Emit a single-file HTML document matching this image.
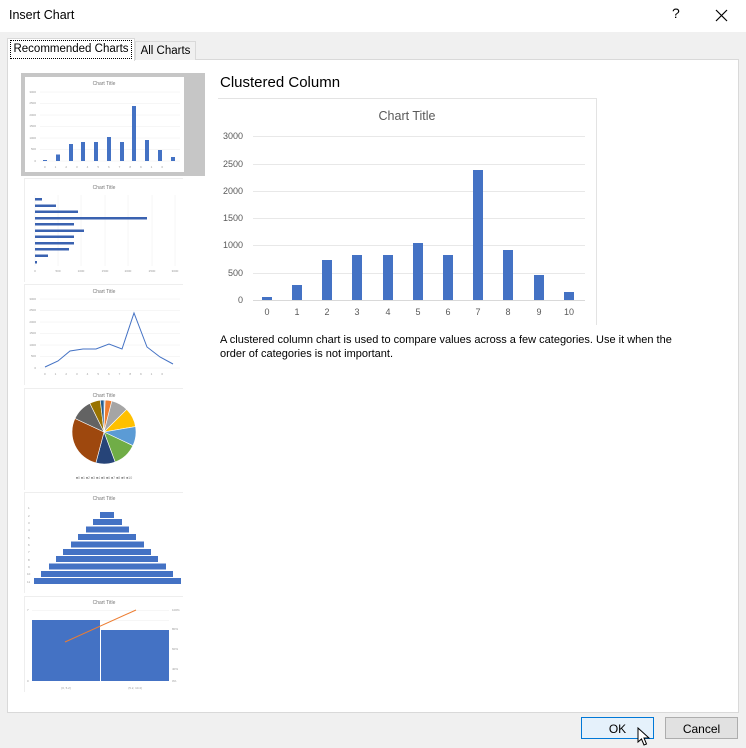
<!DOCTYPE html>
<html><head><meta charset="utf-8"><style>
body{margin:0;width:746px;height:748px;overflow:hidden;background:#f0f0f0;font-family:"Liberation Sans",sans-serif;position:relative}
.abs{position:absolute;white-space:nowrap}
.title{left:0;top:0;width:746px;height:32px;background:#fff}
.btn{top:717px;height:22px;font-size:12px;text-align:center;line-height:22px;box-sizing:border-box}
</style></head><body>
<div class="abs title"></div>
<div class="abs" style="left:9px;top:8px;font-size:12.5px;color:#000">Insert Chart</div>
<div class="abs" style="left:672px;top:5px;font-size:14px">?</div>
<svg class="abs" style="left:715px;top:9px" width="13" height="13"><path d="M1 1L12 12M12 1L1 12" stroke="#000" stroke-width="1.2"/></svg>
<div class="abs" style="left:7px;top:59px;width:730px;height:652px;background:#fff;border:1px solid #d9d9d9"></div>
<div class="abs" style="left:135px;top:41px;width:59px;height:18px;border:1px solid #d9d9d9;border-bottom:none;background:#f0f0f0;font-size:11.5px;line-height:19px;text-align:center">All Charts</div>
<div class="abs" style="left:7px;top:38px;width:126px;height:22px;border:1px solid #d9d9d9;border-bottom:none;background:#fff"></div>
<div class="abs" style="left:10px;top:40px;width:120px;height:17px;border:1px dotted #000;font-size:11.5px;line-height:17px;text-align:center">Recommended Charts</div>
<div class="abs" style="left:220px;top:74px;font-size:15px;color:#000">Clustered Column</div>
<div class="abs" style="left:220px;top:333px;width:478px;white-space:normal;font-size:11px;line-height:14px;color:#000">A clustered column chart is used to compare values across a few categories. Use it when the order of categories is not important.</div>

<svg class="abs" style="left:0;top:0" width="746" height="748" font-family="Liberation Sans, sans-serif">
<path d="M218 98.5H596.5V325" fill="none" stroke="#e3e3e3"/>
<text x="407" y="120" font-size="12.5" fill="#595959" text-anchor="middle">Chart Title</text>
<g stroke="#e8e8e8"><path d="M253 136.5H585M253 191.5H585M253 245.5H585M253 273.5H585M253 218.5H585M253 164.5H585"/></g>
<path d="M253 300.5H585" stroke="#d9d9d9"/>
<g font-size="9" fill="#595959" text-anchor="end"><text x="243" y="139">3000</text><text x="243" y="167">2500</text><text x="243" y="194">2000</text><text x="243" y="221">1500</text><text x="243" y="248">1000</text><text x="243" y="276">500</text><text x="243" y="303">0</text></g>
<g font-size="9" fill="#595959" text-anchor="middle"><text x="267" y="315">0</text><text x="297" y="315">1</text><text x="327" y="315">2</text><text x="357" y="315">3</text><text x="388" y="315">4</text><text x="418" y="315">5</text><text x="448" y="315">6</text><text x="478" y="315">7</text><text x="508" y="315">8</text><text x="539" y="315">9</text><text x="569" y="315">10</text></g>
<g fill="#4472c4"><rect x="262" y="297" width="10" height="3"/><rect x="292" y="285" width="10" height="15"/><rect x="322" y="260" width="10" height="40"/><rect x="352" y="255" width="10" height="45"/><rect x="383" y="255" width="10" height="45"/><rect x="413" y="243" width="10" height="57"/><rect x="443" y="255" width="10" height="45"/><rect x="473" y="170" width="10" height="130"/><rect x="503" y="250" width="10" height="50"/><rect x="534" y="275" width="10" height="25"/><rect x="564" y="292" width="10" height="8"/></g>

<g fill="none" stroke="#eeeeee"><path d="M24.5 282V178.5H183M24.5 385V284.5H183M24.5 490V388.5H183M24.5 593V492.5H183M24.5 692V596.5H183"/></g>
<rect x="21" y="73" width="184" height="103" fill="#c6c6c6"/>
<rect x="25" y="77" width="159" height="95" fill="#fff"/>
<text x="104" y="85" font-size="5" fill="#777" text-anchor="middle">Chart Title</text>
<g stroke="#eee" stroke-width=".5"><path d="M40 92H180M40 103.5H180M40 115H180M40 126.5H180M40 138H180M40 149.5H180M40 161H180"/></g>
<g font-size="3" fill="#999" text-anchor="end"><text x="36" y="93">3000</text><text x="36" y="104">2500</text><text x="36" y="116">2000</text><text x="36" y="127">1500</text><text x="36" y="139">1000</text><text x="36" y="150">500</text><text x="36" y="162">0</text></g>
<text x="108" y="168" font-size="3" fill="#999" text-anchor="middle" letter-spacing="9">012345678910</text>
<g fill="#4472c4"><rect x="43" y="160" width="4" height="1"/><rect x="56" y="154.5" width="4" height="6.5"/><rect x="69" y="144" width="4" height="17"/><rect x="81" y="142" width="4" height="19"/><rect x="94" y="142" width="4" height="19"/><rect x="107" y="137" width="4" height="24"/><rect x="120" y="142" width="4" height="19"/><rect x="132" y="106" width="4" height="55"/><rect x="145" y="140" width="4" height="21"/><rect x="158" y="150" width="4" height="11"/><rect x="171" y="157" width="4" height="4"/></g>

<text x="104" y="189" font-size="5" fill="#777" text-anchor="middle">Chart Title</text>
<g stroke="#eee" stroke-width=".5"><path d="M35 195V266M58 195V266M81 195V266M105 195V266M128 195V266M152 195V266M175 195V266"/></g>
<g font-size="3" fill="#999" text-anchor="middle"><text x="35" y="272">0</text><text x="58" y="272">500</text><text x="81" y="272">1000</text><text x="105" y="272">1500</text><text x="128" y="272">2000</text><text x="152" y="272">2500</text><text x="175" y="272">3000</text></g>
<g fill="#3a62b0"><rect x="35" y="198" width="7" height="2.5"/><rect x="35" y="204.5" width="21" height="2.5"/><rect x="35" y="210.5" width="43" height="2.5"/><rect x="35" y="217" width="112" height="2.5"/><rect x="35" y="223" width="39" height="2.5"/><rect x="35" y="229.5" width="49" height="2.5"/><rect x="35" y="235.5" width="39" height="2.5"/><rect x="35" y="242" width="39" height="2.5"/><rect x="35" y="248" width="34" height="2.5"/><rect x="35" y="254.5" width="13" height="2.5"/><rect x="35" y="261" width="2" height="2.5"/></g>

<text x="104" y="293" font-size="5" fill="#777" text-anchor="middle">Chart Title</text>
<g stroke="#eee" stroke-width=".5"><path d="M40 299H180M40 310.5H180M40 322H180M40 333.5H180M40 345H180M40 356.5H180M40 368H180"/></g>
<g font-size="3" fill="#999" text-anchor="end"><text x="36" y="300">3000</text><text x="36" y="311">2500</text><text x="36" y="323">2000</text><text x="36" y="334">1500</text><text x="36" y="346">1000</text><text x="36" y="357">500</text><text x="36" y="369">0</text></g>
<text x="108" y="375" font-size="3" fill="#999" text-anchor="middle" letter-spacing="9">012345678910</text>
<polyline fill="none" stroke="#4472c4" stroke-width="1" points="45,367 58,361 70,351 83,349 96,349 109,344 122,349 134,313 147,347 160,357 173,364"/>

<text x="104" y="397" font-size="5" fill="#777" text-anchor="middle">Chart Title</text>
<g id="pie" stroke="#fff" stroke-width=".6"></g>
<text x="104" y="479" font-size="3.5" fill="#888" text-anchor="middle">■0 ■1 ■2 ■3 ■4 ■5 ■6 ■7 ■8 ■9 ■10</text>

<text x="104" y="500" font-size="5" fill="#777" text-anchor="middle">Chart Title</text>
<g fill="#4472c4"><rect x="100" y="512" width="14" height="6"/><rect x="93" y="519" width="29" height="6"/><rect x="86" y="526.5" width="43" height="6"/><rect x="78" y="534" width="58" height="6"/><rect x="71" y="541.5" width="73" height="6"/><rect x="63" y="549" width="88" height="6"/><rect x="56" y="556" width="102" height="6"/><rect x="49" y="563.5" width="117" height="6"/><rect x="41" y="571" width="132" height="6"/><rect x="34" y="578" width="147" height="6"/></g>
<g font-size="3" fill="#999"><text x="28" y="509">1</text><text x="28" y="517">2</text><text x="28" y="524">3</text><text x="28" y="531">4</text><text x="28" y="539">5</text><text x="28" y="546">6</text><text x="28" y="553">7</text><text x="28" y="561">8</text><text x="28" y="568">9</text><text x="27" y="575">10</text><text x="27" y="583">11</text></g>

<text x="104" y="604" font-size="5" fill="#777" text-anchor="middle">Chart Title</text>
<path d="M32 610.5H169M32 620.5H169" stroke="#eee" stroke-width=".5"/>
<rect x="32" y="620" width="68" height="61" fill="#4472c4"/><rect x="101" y="630" width="68" height="51" fill="#4472c4"/>
<path d="M65 642L136 610" stroke="#ed7d31" stroke-width="1"/>
<g font-size="3" fill="#999"><text x="172" y="611">100%</text><text x="172" y="630">80%</text><text x="172" y="650">60%</text><text x="172" y="670">40%</text><text x="172" y="682">0%</text><text x="27" y="611">7</text><text x="27" y="682">0</text></g>
<g font-size="3" fill="#999" text-anchor="middle"><text x="66" y="689">[0, 5.2]</text><text x="135" y="689">(5.2, 10.4]</text></g>
</svg>

<div class="abs btn" style="left:581px;width:73px;border:1px solid #0078d7;background:#e5f1fb">OK</div>
<div class="abs btn" style="left:665px;width:73px;border:1px solid #adadad;background:#e1e1e1">Cancel</div>
<svg class="abs" style="left:637px;top:727px" width="14" height="20"><path d="M1 1V15L4.5 12L7 18L9.5 17L7 11H12Z" fill="#fff" stroke="#000"/></svg>
<script>
var a=[0,2.1,14.2,45.1,80.2,115.3,159.6,194.7,294.9,333.7,353.3,360],c=["#4472c4","#ed7d31","#a5a5a5","#ffc000","#5b9bd5","#70ad47","#264478","#9e480e","#636363","#997300","#255e91"],cx=104,cy=432,r=32,s="";
function p(d){var t=(d-90)*Math.PI/180;return (cx+r*Math.cos(t)).toFixed(2)+" "+(cy+r*Math.sin(t)).toFixed(2)}
for(var i=0;i<11;i++){s+='<path fill="'+c[i]+'" d="M'+cx+' '+cy+'L'+p(a[i])+'A'+r+' '+r+' 0 '+(a[i+1]-a[i]>180?1:0)+' 1 '+p(a[i+1])+'Z"/>';}
document.getElementById("pie").innerHTML=s;
</script>
</body></html>
